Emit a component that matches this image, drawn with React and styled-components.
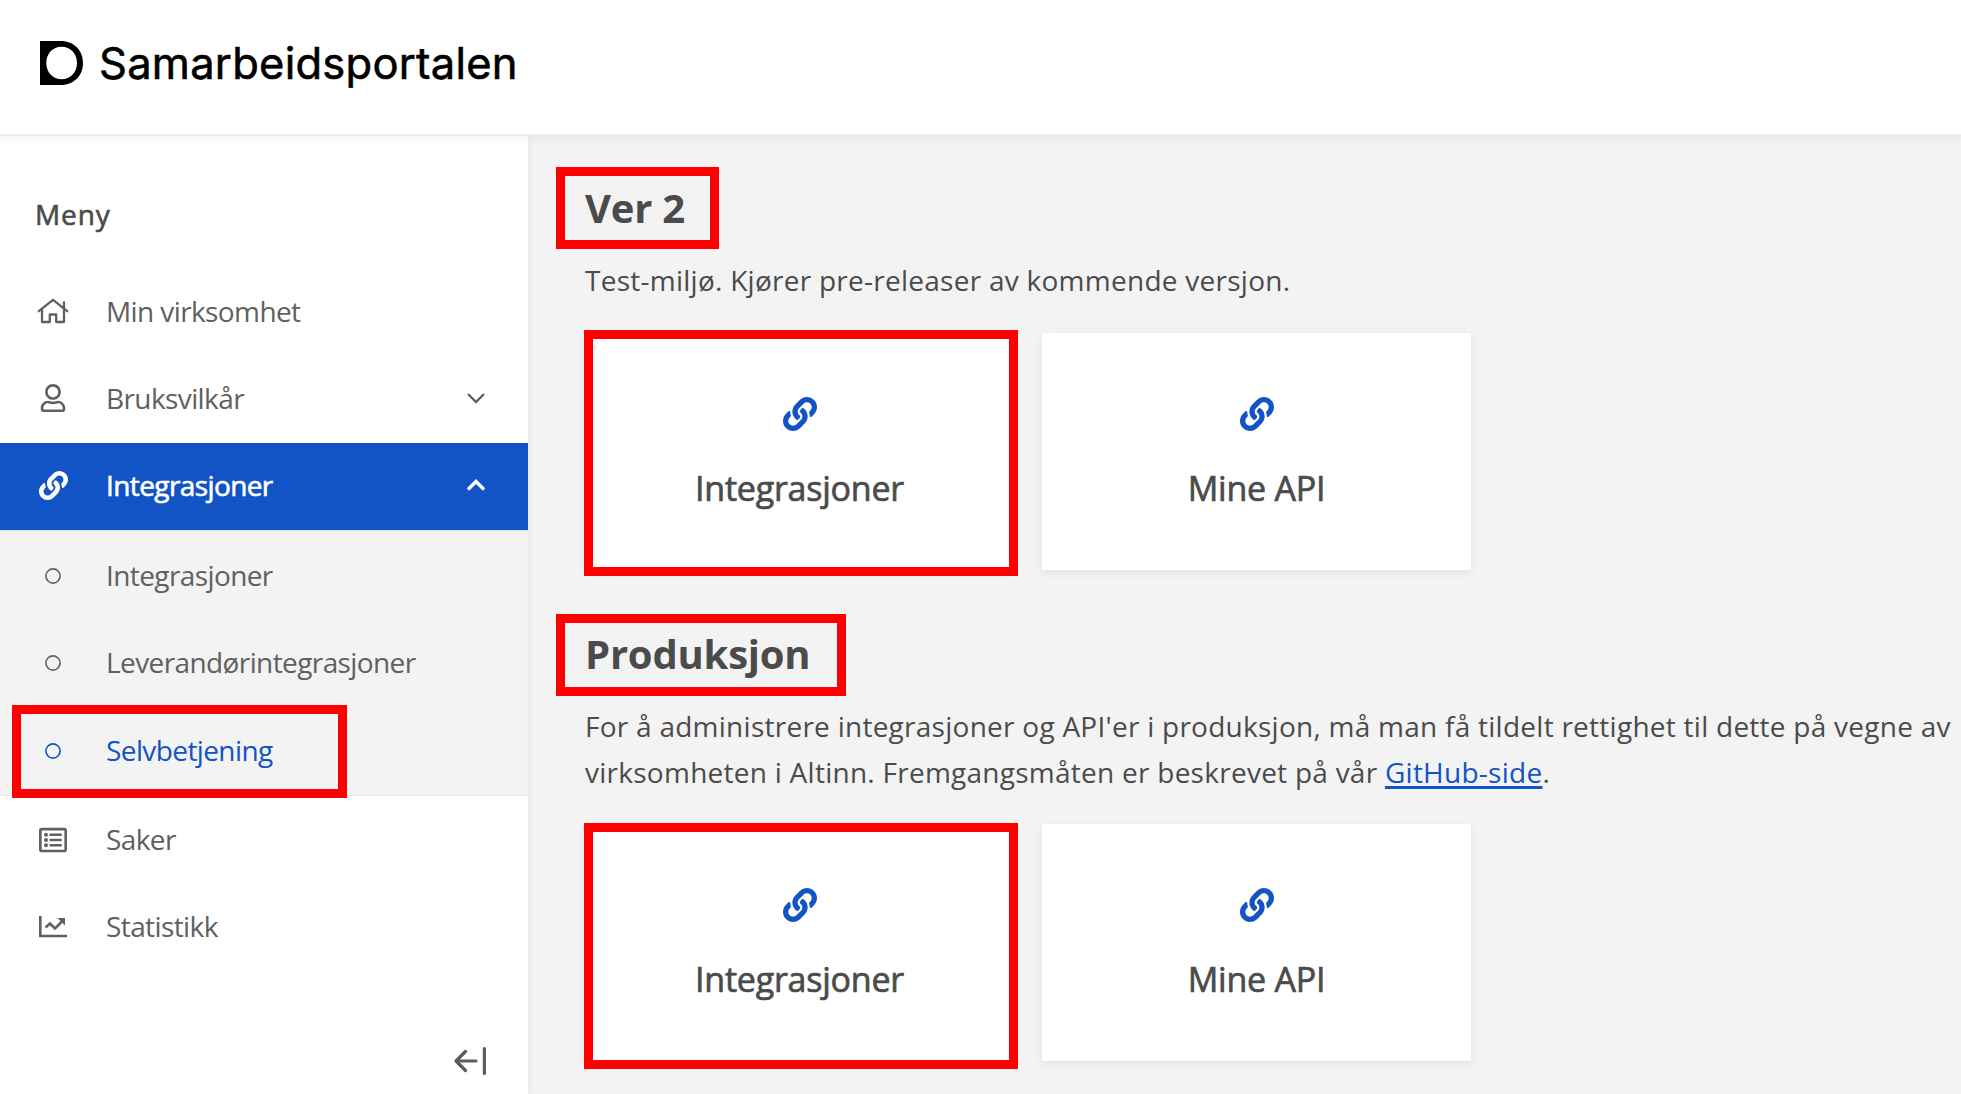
import React from "react";
import styled, { createGlobalStyle } from "styled-components";
import { FaLink, FaRegUser, FaRegListAlt } from "react-icons/fa";

const BLUE = "#1254c6";

const GlobalStyle = createGlobalStyle`
  *, *::before, *::after { box-sizing: border-box; }
  body {
    margin: 0;
    background: #f3f3f3;
    color: #4b4b4b;
    font-family: "Open Sans", "Noto Sans", sans-serif;
    overflow: hidden;
  }
`;

const Page = styled.div`
  display: flex;
  flex-direction: column;
  height: 1094px;
  overflow: hidden;
`;

const Header = styled.header`
  display: flex;
  align-items: flex-start;
  gap: 15px;
  flex: none;
  height: 136px;
  padding: 41px 40px 0;
  background: #fff;
  border-bottom: 2px solid #ebebeb;
  box-shadow: 0 2px 8px rgba(0, 0, 0, 0.06);
  position: relative;
  z-index: 2;
`;

const Brand = styled.span`
  font-family: Inter, Roboto, sans-serif;
  font-size: 43.5px;
  line-height: 44px;
  letter-spacing: 0.25px;
  color: #000;
  -webkit-text-stroke: 0.6px #000;
  white-space: nowrap;
`;

const Body = styled.div`
  display: flex;
  flex: 1;
  min-height: 0;
`;

const Sidebar = styled.nav`
  display: flex;
  flex-direction: column;
  flex: none;
  width: 528px;
  background: #fff;
  box-shadow: 1px 0 6px rgba(0, 0, 0, 0.06);
`;

const MenuTitle = styled.h2`
  margin: 0;
  padding: 57px 35px 0;
  height: 133px;
  font-size: 28px;
  line-height: 42px;
  font-weight: 400;
  letter-spacing: 0.9px;
  -webkit-text-stroke: 0.6px currentColor;
`;

const Item = styled.a`
  display: flex;
  align-items: center;
  flex: none;
  height: ${(p) => p.$height || 87}px;
  padding: 0 42px ${(p) => p.$lift || 0}px 0;
  background: ${(p) => (p.$active ? BLUE : "transparent")};
  color: ${(p) => (p.$active ? "#fff" : p.$selected ? BLUE : "#606060")};
  -webkit-text-stroke: ${(p) => (p.$active ? 0.6 : 0)}px currentColor;
  font-size: 28px;
  position: relative;
`;

const IconSlot = styled.span`
  display: flex;
  align-items: center;
  justify-content: center;
  width: 106px;
  flex: none;
`;

const Label = styled.span`
  flex: 1;
  padding-bottom: ${(p) => p.$lift || 0}px;
  line-height: 42px;
  white-space: nowrap;
  letter-spacing: -0.6px;
`;

const SubMenu = styled.div`
  display: flex;
  flex-direction: column;
  flex: none;
  height: 266px;
  padding-top: 1px;
  background: #f3f3f3;
  border-top: 1px solid #dbe1ec;
  border-bottom: 1px solid #ebebeb;
`;

const Ring = styled.svg.attrs({
  width: 16,
  height: 16,
  viewBox: "0 0 16 16",
  fill: "none",
  stroke: "currentColor",
  strokeWidth: 1.6,
  children: <circle cx="8" cy="8" r="7.1" />,
})`
  display: block;
`;

const CollapseRow = styled.div`
  display: flex;
  justify-content: flex-end;
  padding: 77px 42px 0 0;
`;

const Main = styled.main`
  flex: 1;
  min-width: 0;
  padding: 42px 0 0 57px;
`;

const Section = styled.section`
  height: 446px;
`;

const Title = styled.h1`
  width: max-content;
  margin: 0;
  font-size: 40px;
  line-height: 60px;
  font-weight: 700;
  letter-spacing: -0.22px;
  position: relative;
`;

const Text = styled.p`
  margin: 19px 0 ${(p) => p.$after}px;
  font-size: 28px;
  line-height: 46px;
  white-space: nowrap;
  letter-spacing: 0.26px;
`;

const Link = styled.a`
  color: ${BLUE};
  text-decoration: underline;
  text-decoration-thickness: 3px;
  text-underline-offset: 3px;
`;

const Cards = styled.div`
  display: flex;
  gap: 28px;
`;

const Card = styled.a`
  display: flex;
  flex-direction: column;
  align-items: center;
  width: 429px;
  height: 237px;
  padding-top: 64px;
  background: #fff;
  box-shadow: 0 3px 8px rgba(0, 0, 0, 0.07);
  position: relative;
`;

const CardIcon = styled(FaLink)`
  width: 34px;
  height: 34px;
  color: ${BLUE};
`;

const CardLabel = styled.span`
  margin-top: 32px;
  font-size: 34px;
  line-height: 50px;
  white-space: nowrap;
  letter-spacing: -0.23px;
  -webkit-text-stroke: 0.7px currentColor;
`;

const Marker = styled.span`
  position: absolute;
  top: ${(p) => p.$top}px;
  left: ${(p) => p.$left}px;
  width: ${(p) => p.$w}px;
  height: ${(p) => p.$h}px;
  border: 9px solid #f00;
  pointer-events: none;
  z-index: 3;
`;

const Logo = () => (
  <svg width="44" height="44" viewBox="0 0 44 44">
    <path
      fill="#000"
      fillRule="evenodd"
      d="M0 0H21C34 0 43 9.5 43 22S34 44 21 44H0ZM21.6 5.8C12.7 5.8 6.3 12.7 6.3 22S12.7 38.2 21.6 38.2 37 31.3 37 22 30.5 5.8 21.600 5.800Z"
    />
  </svg>
);

const HomeIcon = () => (
  <svg width="32" height="26" viewBox="0 0 32 26" fill="none" stroke="currentColor" strokeWidth="2.3" strokeLinecap="round" strokeLinejoin="round">
    <path d="M1.800 13.200 16 1.800 30.200 13.200M27 10V4.500M5 11.500V24H12.800V16.500H19.200V24H27V11.500" />
  </svg>
);

const ChartIcon = () => (
  <svg width="28" height="22" viewBox="0 0 28 22" fill="none" stroke="currentColor" strokeWidth="2.600">
    <path d="M1.300 0V20H28" />
    <path d="M6.500 11.500 11 7.500 16 12.500 23.500 5" />
    <path d="M18.500 2H26V9.500Z" fill="currentColor" stroke="none" />
  </svg>
);

const Chevron = ({ up }) => (
  <svg width="20" height="14" viewBox="0 0 20 14" fill="none" stroke="currentColor" strokeWidth={up ? 3.4 : 2.4}>
    <path d={up ? "M2 11.500 10 3.500 18 11.500" : "M2 3 10 11 18 3"} />
  </svg>
);

const CollapseIcon = () => (
  <svg width="33" height="28" viewBox="0 0 33 28" fill="none" stroke="#5c5c5c" strokeWidth="3.200" strokeLinecap="round">
    <path d="M31.400 1.600V26.400" />
    <path d="M12.500 4.500 3 14 12.500 23.500M3.500 14H23" strokeLinejoin="round" />
  </svg>
);

const CardPair = ({ markerTop }) => (
  <Cards>
    <Card>
      <CardIcon />
      <CardLabel>Integrasjoner</CardLabel>
      <Marker $top={markerTop} $left={-1} $w={434} $h={246} />
    </Card>
    <Card>
      <CardIcon />
      <CardLabel>Mine API</CardLabel>
    </Card>
  </Cards>
);

export default function App() {
  return (
    <Page>
      <GlobalStyle />
      <Header>
        <Logo />
        <Brand>Samarbeidsportalen</Brand>
      </Header>
      <Body>
        <Sidebar>
          <MenuTitle>Meny</MenuTitle>
          <Item $lift={4}>
            <IconSlot><HomeIcon /></IconSlot>
            <Label>Min virksomhet</Label>
          </Item>
          <Item $lift={4}>
            <IconSlot><FaRegUser size={28} /></IconSlot>
            <Label>Bruksvilkår</Label>
            <Chevron />
          </Item>
          <Item $active $lift={3}>
            <IconSlot><FaLink size={29} /></IconSlot>
            <Label>Integrasjoner</Label>
            <Chevron up />
          </Item>
          <SubMenu>
            <Item>
              <IconSlot><Ring /></IconSlot>
              <Label $lift={2}>Integrasjoner</Label>
            </Item>
            <Item $height={88}>
              <IconSlot><Ring /></IconSlot>
              <Label $lift={2}>Leverandørintegrasjoner</Label>
            </Item>
            <Item $selected>
              <IconSlot><Ring /></IconSlot>
              <Label $lift={2}>Selvbetjening</Label>
              <Marker $top={-2} $left={12} $w={335} $h={93} />
            </Item>
          </SubMenu>
          <Item>
            <IconSlot><FaRegListAlt size={28} /></IconSlot>
            <Label $lift={1}>Saker</Label>
          </Item>
          <Item>
            <IconSlot><ChartIcon /></IconSlot>
            <Label $lift={1}>Statistikk</Label>
          </Item>
          <CollapseRow><CollapseIcon /></CollapseRow>
        </Sidebar>
        <Main>
          <Section>
            <Title>
              Ver 2
              <Marker $top={-11} $left={-29} $w={163} $h={82} />
            </Title>
            <Text $after={30}>Test-miljø. Kjører pre-releaser av kommende versjon.</Text>
            <CardPair markerTop={-3} />
          </Section>
          <Section>
            <Title>
              Produksjon
              <Marker $top={-10} $left={-29} $w={290} $h={82} />
            </Title>
            <Text $after={29}>
              For å administrere integrasjoner og API'er i produksjon, må man få tildelt rettighet til dette på vegne av
              <br />
              virksomheten i Altinn. Fremgangsmåten er beskrevet på vår <Link>GitHub-side</Link>.
            </Text>
            <CardPair markerTop={-1} />
          </Section>
        </Main>
      </Body>
    </Page>
  );
}
